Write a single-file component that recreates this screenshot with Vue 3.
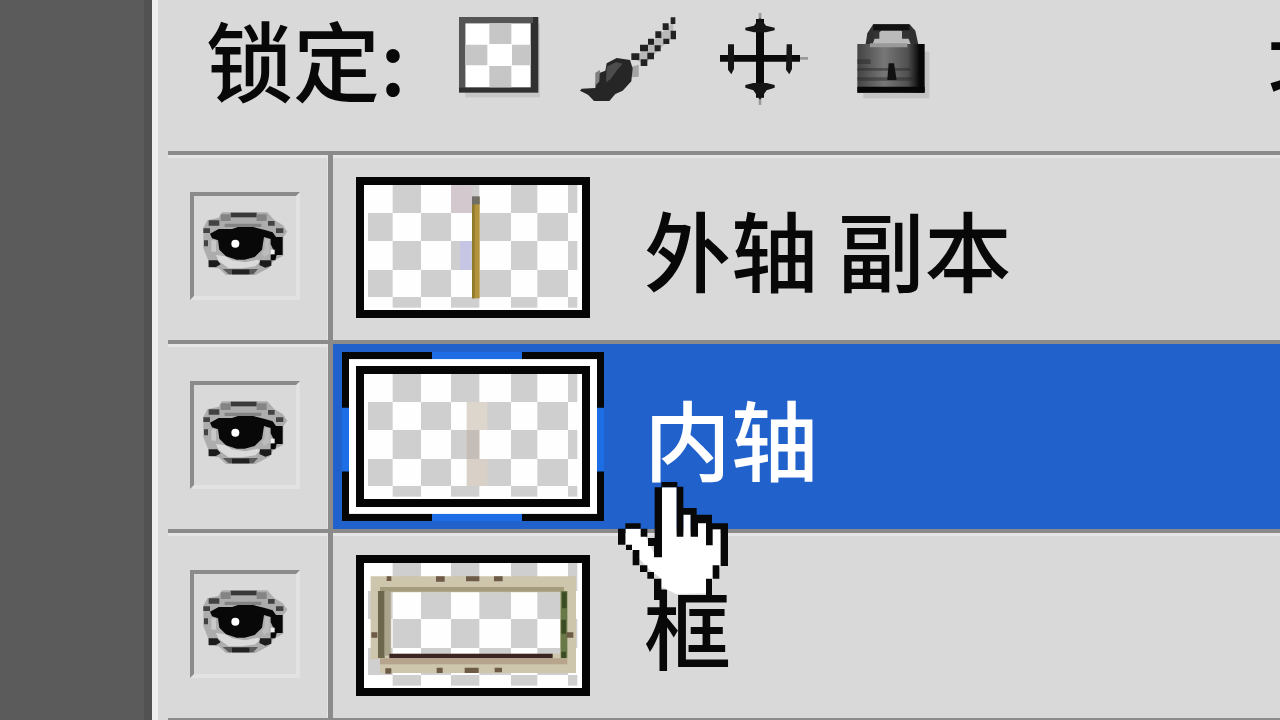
<script setup>
import { ref } from 'vue'

const layers = ref([
  { id: 1, name: '外轴 副本', kind: 'bar', visible: true },
  { id: 2, name: '内轴', kind: 'inner', visible: true },
  { id: 3, name: '框', kind: 'frame', visible: true }
])
const selected = ref(2)

const columns = [12, 86, 171, 261, 346, 441, 520, 612, 640]
const lines = [0, 84, 168, 255, 336, 368]
const cells = []
for (let r = 0; r < 5; r++) {
  for (let c = 0; c < 8; c++) {
    if ((r + c) % 2 === 1) {
      cells.push({
        x: columns[c],
        y: lines[r],
        w: columns[c + 1] - columns[c],
        h: lines[r + 1] - lines[r]
      })
    }
  }
}
</script>

<template>
  <div class="workspace">
    <aside class="backdrop"></aside>
    <main class="panel">
      <header class="locks">
        <span class="caption">锁定:</span>
        <div class="tools">
          <button type="button" aria-label="锁定透明像素">
            <svg width="84" height="100" viewBox="48 24 252 300">
              <rect x="76" y="70" width="232" height="222" fill="#b4b4b4" opacity="0.5" />
              <rect x="57" y="51" width="238" height="227" fill="#303030" />
              <rect x="57" y="51" width="222" height="18" fill="#555" />
              <rect x="57" y="51" width="18" height="212" fill="#555" />
              <rect x="76" y="70" width="196" height="192" fill="#fff" />
              <path d="M148 70h66v62h-66zM76 134h66v62H76zM216 134h56v62h-56zM148 198h66v64h-66z" fill="#c6c6c6" />
            </svg>
          </button>
          <button type="button" aria-label="锁定图像像素">
            <svg width="100" height="100" viewBox="420 24 300 300">
              <path d="M574 232V200l22-6v36z" fill="#a4a4a4" />
              <path d="M425 266L466 264 470 222 496 212 500 190 530 174 570 180 578 205 574 244 548 272 526 282 508 303 462 303 444 284 420 272z" fill="#262626" />
              <path d="M500 200l28-14 20 5-16 18-20 28-14 10z" fill="#4c4c4c" />
              <path d="M466 218l14-8-2 34-12 14z" fill="#808080" />
              <path d="M580 178L700 66v42l-86 84z" fill="#b9b9b9" />
              <path d="M574 160h24v20h-24zM600 134h24v20h-24zM624 116h18v18h-18zM646 94h18v20h-18zM668 70h18v20h-18zM692 52h14v20h-14zM602 178h20v20h-20zM622 158h20v20h-20zM644 136h18v18h-18zM670 116h18v16h-18zM692 92h16v26h-16z" fill="#222" />
            </svg>
          </button>
          <button type="button" aria-label="锁定位置">
            <svg width="90" height="100" viewBox="24 5 270 300">
              <path d="M144 20v276M4 156h284" stroke="#9a9a9a" stroke-width="8" />
              <path d="M132 38h24v108h108v20H156v108h-24V166H24v-20h108z" fill="#0a0a0a" />
              <path d="M144 34l18 24 26 6v8l-26 6h-36l-26-6v-8l26-6zM144 280l-20-28-24-8v-8l24-6h40l24 6v8l-24 8zM48 114h18v74l-8 16-10-14zM224 114h16v74l-8 16-10-14z" fill="#151515" />
            </svg>
          </button>
          <button type="button" aria-label="锁定全部">
            <svg width="80" height="100" viewBox="450 24 240 300">
              <defs>
                <linearGradient id="lockbody" x1="0" x2="1" y1="0" y2="0">
                  <stop offset="0" stop-color="#444" />
                  <stop offset="0.4" stop-color="#777" />
                  <stop offset="0.75" stop-color="#505050" />
                  <stop offset="0.92" stop-color="#080808" />
                </linearGradient>
              </defs>
              <path d="M490 155h198v140H490z" fill="#b6b6b6" opacity="0.6" />
              <path d="M496 138L502 100 520 72H628L646 92 656 138z" fill="#303030" />
              <path d="M518 132l10-28 16-12h60l20 20 8 20z" fill="#bababa" />
              <path d="M520 94h18v22h-18zM606 94h22v22h-22z" fill="#333" />
              <path d="M520 74h108v17H520z" fill="#111" />
              <path d="M472 132h202v146H472z" fill="url(#lockbody)" />
              <path d="M510 130h112v12H510z" fill="#999" />
              <path d="M472 178h40v14h-40zM472 204h160v8H472zM472 232h170v10H472z" fill="#292929" opacity="0.5" />
              <path d="M566 190h16l8 50h-28z" fill="#111" />
              <path d="M472 260h202v18H472z" fill="#070707" />
            </svg>
          </button>
        </div>
        <span class="caption fill">填充:</span>
      </header>

      <ul class="layers">
        <li v-for="layer in layers" :key="layer.id" class="layer" :class="{ active: selected === layer.id }">
          <div class="visibility">
            <button type="button" class="eye" :aria-pressed="layer.visible" aria-label="图层可见性" @click="layer.visible = !layer.visible">
              <svg v-if="layer.visible" width="88" height="72" viewBox="17 25 264 216">
                <path d="M24 84L36 62 70 54 80 38H216L236 60 262 76 276 96 264 112V168L234 184 222 204 180 226H92L70 206 40 204 38 180 24 146z" fill="#adadad" />
                <path d="M106 39h78v14h-78z" fill="#383838" />
                <path d="M76 44h30v20H76zM184 44h30v20h-30zM88 72h110v10H88z" fill="#848484" />
                <path d="M40 62h32v16H40zM218 64h20v14h-20zM24 86h20v14H24zM242 86h22v14h-22zM26 122h12v18H26z" fill="#424242" />
                <path d="M44 102L70 88H110L128 82H174L206 90 232 98 242 112H262V166H244L240 182H226V166L236 154 226 134V118L206 112 200 150 178 172 148 180H124L92 170 72 150 68 122 50 116z" fill="#080808" />
                <path d="M48 122h14v34H48z" fill="#c9c9c9" />
                <path d="M208 118h14v44l-16 10-6-12 8-12z" fill="#bcbcbc" />
                <path d="M226 150h12v14h-12z" fill="#eee" />
                <path d="M62 166l28 4 20 12 40 6 36-8 10 4-16 16-40 6H100L70 184z" fill="#dadada" />
                <path d="M40 182h26l10 12-14 8H40zM194 182h34v16l-18 6-18-8z" fill="#1c1c1c" />
                <path d="M82 208h106l-14 16H100z" fill="#5a5a5a" />
                <path d="M110 210h52v14h-52z" fill="#222" />
                <circle cx="120" cy="132" r="12" fill="#fff" />
              </svg>
            </button>
          </div>
          <button type="button" class="entry" @click="selected = layer.id">
            <span class="thumb">
              <svg class="art" viewBox="0 0 654 375" preserveAspectRatio="none" aria-hidden="true">
                <rect width="654" height="375" fill="#fefefe" />
                <rect v-for="(k, i) in cells" :key="i" :x="k.x" :y="k.y" :width="k.w" :height="k.h" fill="#cfcfcf" />
                <g v-if="layer.kind === 'bar'">
                  <rect x="261" y="0" width="62" height="84" fill="#d3c8ce" />
                  <rect x="288" y="168" width="35" height="87" fill="#c6c6e4" />
                  <rect x="324" y="36" width="23" height="304" fill="#b2933d" />
                  <rect x="324" y="36" width="8" height="304" fill="#8f7a2b" />
                  <rect x="324" y="34" width="23" height="24" fill="#706f67" />
                </g>
                <g v-if="layer.kind === 'inner'">
                  <rect x="308" y="84" width="62" height="84" fill="#dcd6cd" />
                  <rect x="308" y="168" width="38" height="87" fill="#c5bdb7" />
                  <rect x="308" y="255" width="62" height="81" fill="#d9d1c8" />
                </g>
                <g v-if="layer.kind === 'frame'">
                  <path fill-rule="evenodd" d="M20 40H636V330H48V288H20zM82 88V272H588V88z" fill="#cdc6ac" />
                  <path d="M48 72H600V86H48z" fill="#a49b7c" />
                  <path d="M42 84H62V285H42z" fill="#6d674e" />
                  <path d="M62 84H80V278H62z" fill="#aaa48d" />
                  <path d="M590 84H610V285H590z" fill="#687846" />
                  <path d="M594 88h14v48h-14zM592 170h14v42h-14zM592 266h14v20h-14z" fill="#3c4c24" />
                  <path d="M76 272H566V286H76z" fill="#3b2523" />
                  <path d="M48 286H610V304H48z" fill="#b6a58c" />
                  <path d="M68 40h14v14H68zM216 40h26v16h-26zM306 40h40v15h-40zM390 40h26v15h-26zM64 316h18v16H64zM218 314h18v16h-18zM302 314h42v16h-42zM392 314h22v14h-22zM22 208h18v16H22zM608 208h20v16h-20z" fill="#6d5b47" />
                </g>
              </svg>
              <svg v-if="selected === layer.id" class="marker" viewBox="0 0 262 167" preserveAspectRatio="none" aria-hidden="true">
                <rect width="262" height="167" fill="#1d6ee5" />
                <path d="M0 0H90V8H8V55H0zM180 0H262V55H254V8H180zM0 118H8V159H90V167H0zM254 118H262V167H180V159H254z" fill="#060606" />
                <rect x="7" y="7" width="248" height="153" fill="#fff" />
              </svg>
            </span>
            <span class="name">{{ layer.name }}</span>
          </button>
        </li>
      </ul>
    </main>

    <svg class="hand" width="116" height="120" viewBox="48 264 348 360" aria-hidden="true">
      <path d="M186 286H230V430H250V366H272V430H292V390H320V456H336V412H362V520L340 556L322 604L228 606L184 584V560L150 534L78 458V410H124L148 456L166 492H186z" fill="#fff" />
      <path d="M184 270h48v16h-48zM164 286h22v210h-24v-34h-18v-24h20zM230 284h20v64h40v20h46v26h48v128h-22V412h-24v48h-20v-66h-24v40h-22v-66h-22v66h-20zM76 394h46v16H76zM122 410h20v24h-20zM54 410h22v48H54zM78 458h18v16H78zM98 474h20v46H98zM120 520h22v20h-22zM142 540h20v20h-20zM162 560h22v64h-22zM338 520h20v40h-20zM318 560h18v50h-18z" fill="#080808" />
    </svg>
  </div>
</template>

<style>
html,
body {
  margin: 0;
  overflow: hidden;
}
</style>

<style scoped>
.workspace {
  position: relative;
  display: grid;
  grid-template-columns: 152px minmax(0, 1fr);
  height: 100vh;
  overflow: hidden;
  background: #d9d9d9;
  color: #080808;
  font-family: "Noto Sans CJK SC", sans-serif;
}

.backdrop {
  background: #5b5b5b;
  border-right: 8px solid #525252;
}

.panel {
  border-left: 6px solid #efefef;
  padding-left: 10px;
  min-width: 0;
}

button {
  padding: 0;
  border: 0;
  background: none;
  color: inherit;
  font: inherit;
  text-align: left;
}

svg {
  display: block;
}

.locks {
  display: flex;
  align-items: center;
  height: 151px;
  padding: 0 0 36px 38px;
  box-sizing: border-box;
}

.caption {
  flex: none;
  width: 250px;
  font-size: 87px;
  line-height: 114px;
  white-space: nowrap;
}

.fill {
  width: 12px;
  margin-left: auto;
}

.tools {
  display: flex;
  gap: 40px;
}

.layers {
  margin: 0;
  padding: 0;
  list-style: none;
}

.layer {
  display: flex;
  border-top: 4px solid #8b8b8b;
}

.layer:last-child {
  border-bottom: 4px solid #8b8b8b;
}

.visibility {
  display: flex;
  align-items: center;
  justify-content: center;
  flex: none;
  width: 160px;
  padding: 0 6px 6px 0;
  box-sizing: border-box;
  border-top: 3px solid #e5e5e5;
  border-right: 1px solid #e5e5e5;
}

.eye {
  display: flex;
  justify-content: center;
  width: 110px;
  height: 108px;
  padding-top: 12px;
  box-sizing: border-box;
  border-style: solid;
  border-width: 4px;
  border-color: #8b8b8b #e2e2e2 #e2e2e2 #8b8b8b;
}

.entry {
  display: flex;
  align-items: center;
  flex: 1;
  min-width: 0;
  gap: 54px;
  padding: 22px 0 22px 23px;
  border-left: 5px solid #8b8b8b;
  border-radius: 0;
  box-shadow: inset 0 3px #e5e5e5;
}

.active .entry {
  background: #2061cb;
  color: #fff;
  box-shadow: none;
}

.thumb {
  position: relative;
  flex: none;
  width: 234px;
  height: 141px;
}

.art {
  position: relative;
  z-index: 1;
  width: 100%;
  height: 100%;
  box-sizing: border-box;
  border: 8px solid #050505;
}

.marker {
  position: absolute;
  top: -14px;
  left: -14px;
  width: 262px;
  height: 169px;
}

.caption,
.name {
  font-weight: 500;
}

.name {
  font-size: 87px;
  line-height: 124px;
  white-space: nowrap;
}

.hand {
  position: absolute;
  left: 616px;
  top: 480px;
  pointer-events: none;
}
</style>
